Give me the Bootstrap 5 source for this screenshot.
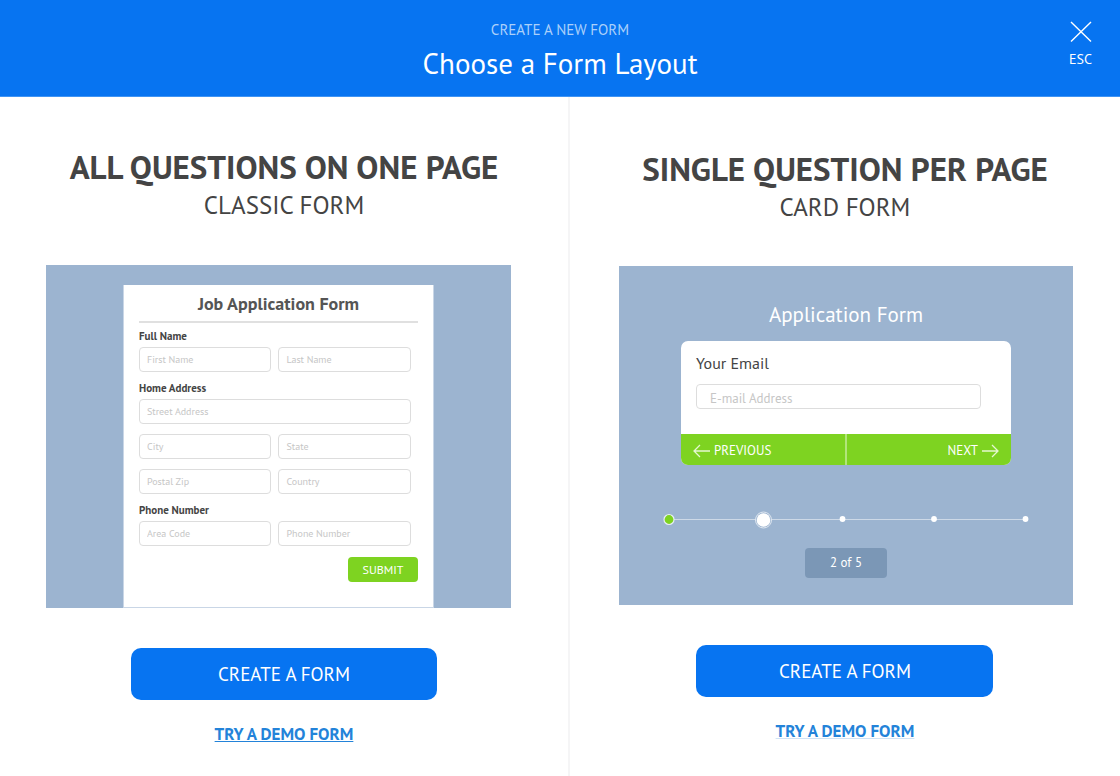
<!DOCTYPE html>
<html lang="en">
<head>
<meta charset="utf-8">
<meta name="viewport" content="width=device-width, initial-scale=1">
<title>Choose a Form Layout</title>
<link rel="stylesheet" href="https://cdn.jsdelivr.net/npm/bootstrap@5.3.0/dist/css/bootstrap.min.css">
<style>
  body { font-family: "PT Sans", Lato, sans-serif; color: #444; background: #fff; }
  .topbar { background: #0774f1; padding: 18px 0 12px; border-bottom: 1px solid #3f94f4; }
  .eyebrow { font-size: 15px; line-height: 24px; color: #abd0fa; }
  .page-title { font-size: 29px; line-height: 42px; font-weight: 400; }
  .close-btn { position: absolute; right: 28px; top: 21px; font-size: 14px; line-height: 18px; }
  .choices { flex: 1; }
  .choice { padding: 50px 0 24px; min-width: 0; }
  .choice-classic { flex: 569 1 0; border-right: 2px solid #f5f5f6; }
  .choice-single { flex: 551 1 0; padding-top: 52px; }
  .choice-title { font-size: 33px; line-height: 40px; font-weight: 700; }
  .choice-sub { font-size: 25px; line-height: 36px; font-weight: 400; margin-bottom: 42px; }
  .choice-single .choice-sub { margin-bottom: 41px; }
  .preview { background: #9cb4d0; }
  .choice-classic .preview { margin: 0 57px 40px 46px; padding: 20px 77px 0; }
  .choice-single .preview { margin: 0 47px 40px 49px; padding: 31px 62px 27px; }
  .sheet { background: #fff; padding: 2px 15px 25px; border: 1px solid #c9d6e6; border-width: 0 1px 1px; }
  .sheet-title { font-size: 18px; line-height: 34px; font-weight: 700; border-bottom: 2px solid #e0e0e0; margin-bottom: 5px; color: #555; }
  .fields { margin-right: 7px; gap: 7px; }
  .fields + .fields { margin-top: 10px; }
  .fields + .field-label { margin-top: 8px; }
  .field-label { display: block; font-size: 11px; line-height: 16px; font-weight: 700; margin-bottom: 3px; }
  .form-control.field { height: 25px; padding: 0 7px; font-size: 10px; line-height: 16px; border: 1px solid #ddd; border-radius: 4px; min-width: 0; }
  .form-control.field::placeholder { color: #c6c6c6; }
  .btn.submit { background: #7ed321; color: #fff; font-size: 12px; line-height: 25px; width: 70px; padding: 0; border: 0; border-radius: 4px; margin-top: 11px; }
  .preview-title { font-size: 21px; line-height: 36px; color: #fff; margin-bottom: 8px; font-weight: 400; }
  .question { background: #fff; border-radius: 7px; }
  .question-body { padding: 10px 30px 25px 15px; }
  .question-label { display: block; font-size: 16px; line-height: 24px; margin-bottom: 9px; }
  .form-control.field.email { font-size: 13px; padding: 3px 13px 0; }
  .step-btn { background: #7ed321; color: #fff; border: 0; font-size: 13px; line-height: 29px; padding: 2px 12px 0; flex: 1 1 0; gap: 4px; }
  .step-btn + .step-btn { border-left: 2px solid #b2e57a; }
  .steps { display: block; width: calc(100% + 36px); margin: 43px -18px 16px; }
  .counter { background: #7b97b6; color: #fff; font-size: 13px; line-height: 30px; width: 82px; border-radius: 4px; }
  .btn.create { background: #0774f1; color: #fff; font-size: 19px; line-height: 52px; padding: 0; border: 0; border-radius: 10px; width: 54%; margin-bottom: 22px; }
  .btn.submit:hover, .btn.create:hover { color: #fff; filter: brightness(.95); }
  .demo { font-size: 17px; line-height: 24px; font-weight: 700; color: #2383d9; }
  .choice-single .demo { text-decoration-color: #cfe3f6; }
</style>
</head>
<body class="d-flex flex-column min-vh-100">
<header class="topbar position-relative text-center text-white">
  <div class="eyebrow">CREATE A NEW FORM</div>
  <h1 class="page-title mb-0">Choose a Form Layout</h1>
  <button type="button" class="close-btn btn p-0 border-0 rounded-0 text-white d-flex flex-column align-items-center gap-2">
    <svg width="22" height="21" viewBox="0 0 22 21" fill="none" stroke="#fff" stroke-width="1.4" aria-hidden="true"><path d="M1 1 21 20.5M21 1 1 20.5"/></svg>
    <span>ESC</span>
  </button>
</header>

<main class="choices d-flex">
  <section class="choice choice-classic text-center">
    <h2 class="choice-title mb-0">ALL QUESTIONS ON ONE PAGE</h2>
    <p class="choice-sub">CLASSIC FORM</p>
    <div class="preview">
      <form class="sheet text-start">
        <h3 class="sheet-title text-center">Job Application Form</h3>
        <label class="field-label" for="first">Full Name</label>
        <div class="fields d-flex">
          <input id="first" class="form-control field" placeholder="First Name">
          <input class="form-control field" placeholder="Last Name" aria-label="Last Name">
        </div>
        <label class="field-label" for="street">Home Address</label>
        <div class="fields d-flex">
          <input id="street" class="form-control field" placeholder="Street Address">
        </div>
        <div class="fields d-flex">
          <input class="form-control field" placeholder="City" aria-label="City">
          <input class="form-control field" placeholder="State" aria-label="State">
        </div>
        <div class="fields d-flex">
          <input class="form-control field" placeholder="Postal Zip" aria-label="Postal Zip">
          <input class="form-control field" placeholder="Country" aria-label="Country">
        </div>
        <label class="field-label" for="area">Phone Number</label>
        <div class="fields d-flex">
          <input id="area" class="form-control field" placeholder="Area Code">
          <input class="form-control field" placeholder="Phone Number" aria-label="Phone Number">
        </div>
        <button type="button" class="btn submit d-block ms-auto">SUBMIT</button>
      </form>
    </div>
    <button type="button" class="btn create">CREATE A FORM</button>
    <div><a class="demo" href="#">TRY A DEMO FORM</a></div>
  </section>

  <section class="choice choice-single text-center">
    <h2 class="choice-title mb-0">SINGLE QUESTION PER PAGE</h2>
    <p class="choice-sub">CARD FORM</p>
    <div class="preview">
      <h3 class="preview-title">Application Form</h3>
      <form class="question overflow-hidden text-start">
        <div class="question-body">
          <label class="question-label" for="email">Your Email</label>
          <input id="email" type="email" class="form-control field email" placeholder="E-mail Address">
        </div>
        <div class="d-flex">
          <button type="button" class="step-btn d-flex align-items-center">
            <svg width="17" height="14" viewBox="0 0 17 14" fill="none" stroke="#e5f7d0" stroke-width="1.3" aria-hidden="true"><path d="M17 7H1M7 1 1 7l6 6"/></svg>
            <span>PREVIOUS</span>
          </button>
          <button type="button" class="step-btn d-flex align-items-center justify-content-end">
            <span>NEXT</span>
            <svg width="17" height="14" viewBox="0 0 17 14" fill="none" stroke="#e5f7d0" stroke-width="1.3" aria-hidden="true"><path d="M0 7h16M10 1l6 6-6 6"/></svg>
          </button>
        </div>
      </form>
      <svg class="steps" viewBox="0 0 366 24" role="img" aria-label="Step 2 of 5">
        <path d="M6 11.5H362" stroke="#cdd9e7"/>
        <circle cx="6" cy="11.5" r="5" fill="#7ed321" stroke="#e8eef5" stroke-width="1.2"/>
        <circle cx="100.5" cy="12" r="8" fill="#9cb4d0" stroke="#dfe7f0"/>
        <circle cx="100.5" cy="12" r="6.8" fill="#fff"/>
        <circle cx="179.5" cy="11" r="2.9" fill="#fff"/>
        <circle cx="271" cy="11" r="2.9" fill="#fff"/>
        <circle cx="362.5" cy="11" r="2.9" fill="#fff"/>
      </svg>
      <div class="counter mx-auto">2 of 5</div>
    </div>
    <button type="button" class="btn create">CREATE A FORM</button>
    <div><a class="demo" href="#">TRY A DEMO FORM</a></div>
  </section>
</main>
<script src="https://cdn.jsdelivr.net/npm/bootstrap@5.3.0/dist/js/bootstrap.bundle.min.js"></script>
</body>
</html>
